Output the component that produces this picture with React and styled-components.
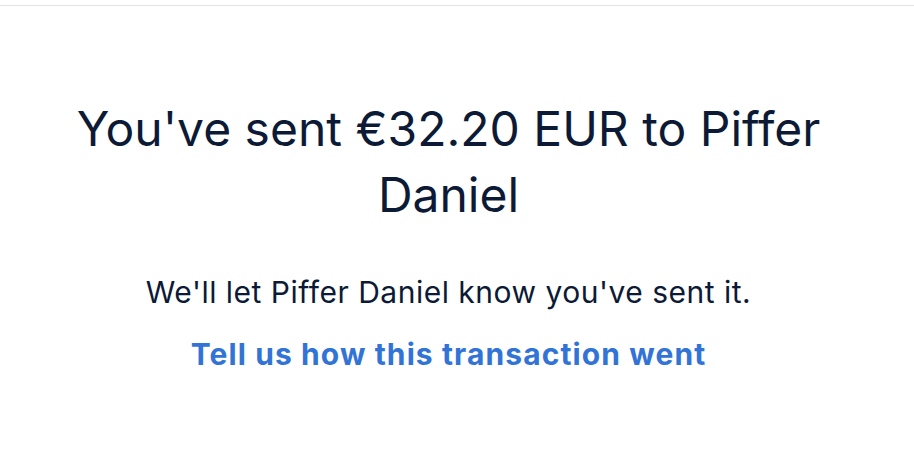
import React from "react";
import styled, { createGlobalStyle } from "styled-components";

const Global = createGlobalStyle`
  html, body { margin: 0; padding: 0; background: #ffffff; }
  body { font-family: Inter, "Noto Sans", sans-serif; -webkit-font-smoothing: antialiased; }
`;

const Page = styled.div`
  display: flex;
  flex-direction: column;
  min-height: 450px;
  padding-top: 5px;
  box-sizing: border-box;
`;

const TopRule = styled.div`
  height: 1px;
  background: #e3e3e3;
`;

const Content = styled.main`
  display: flex;
  flex-direction: column;
  align-items: center;
  padding: 90px 17px 0 0;
  text-align: center;
`;

const Heading = styled.h1`
  margin: 0;
  max-width: 780px;
  font-size: 48px;
  line-height: 66px;
  font-weight: 400;
  color: #0c1a36;
  letter-spacing: 0;
`;

const Message = styled.p`
  margin: 46px 0 0;
  font-size: 30px;
  line-height: 36px;
  font-weight: 400;
  letter-spacing: 0.5px;
  color: #0c1a36;
`;

const FeedbackLink = styled.a`
  margin-top: 26px;
  font-size: 30px;
  line-height: 36px;
  font-weight: 700;
  letter-spacing: 1.1px;
  color: #3274d6;
  text-decoration: none;
  cursor: pointer;
`;

export default function App() {
  return (
    <>
      <Global />
      <Page>
        <TopRule />
        <Content>
          <Heading>You've sent €32.20 EUR to Piffer Daniel</Heading>
          <Message>We'll let Piffer Daniel know you've sent it.</Message>
          <FeedbackLink href="#">Tell us how this transaction went</FeedbackLink>
        </Content>
      </Page>
    </>
  );
}
